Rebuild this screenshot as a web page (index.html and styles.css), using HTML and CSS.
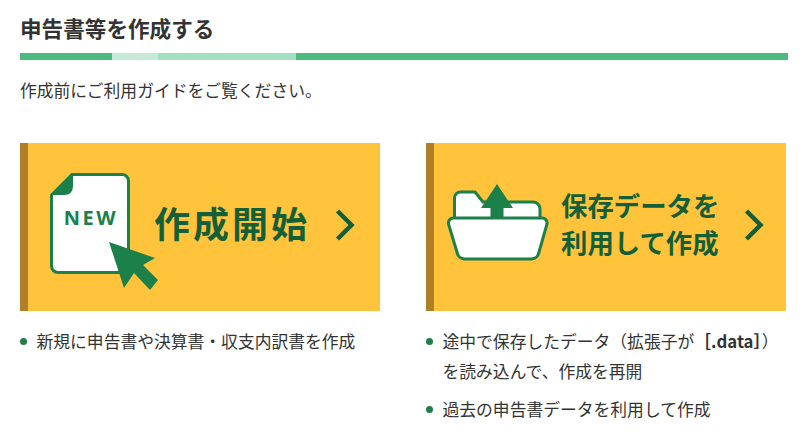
FILE: index.html
```html
<!DOCTYPE html>
<html lang="ja">
	<head>
		<meta charset="utf-8" />
		<meta name="viewport" content="width=device-width, initial-scale=1">
		<title>申告書等を作成する</title>
		<link rel="stylesheet" href="styles.css">
	</head>
	<body>
		<h1 class="title">申告書等を作成する</h1>
		<div class="bar">
			<span class="seg seg-a"></span>
			<span class="seg seg-b"></span>
			<span class="seg seg-c"></span>
			<span class="seg seg-d"></span>
		</div>
		<p class="guide">作成前にご利用ガイドをご覧ください。</p>

		<div class="cols">
			<div class="col">
				<a href="#" class="card card-new">
					<svg class="icon-new" width="110" height="118" viewBox="0 0 110 118">
						<path d="M22 1.5H72a6.500 6.500 0 0 1 6.500 6.500V93a6.500 6.500 0 0 1-6.500 6.500H8A6.500 6.500 0 0 1 1.500 93V22Z" fill="#fff" stroke="#1b8049" stroke-width="3"/>
						<path d="M22 1L1 22H14Q23 22 23 13V1Z" fill="#1b8049"/>
						<text x="41" y="52" class="new-text" text-anchor="middle">NEW</text>
						<path d="M59 69L105 85L93 92L108 107L100 117L84 100L74 115Z" fill="#1b8049"/>
					</svg>
					<span class="label label-big">作成開始</span>
					<svg class="arrow" width="20" height="34" viewBox="0 0 20 34">
						<path d="M2.500 3L16.500 17L2.500 31" fill="none" stroke="#145f37" stroke-width="4.500"/>
					</svg>
				</a>
				<ul class="notes">
					<li>新規に申告書や決算書・収支内訳書を作成</li>
				</ul>
			</div>
			<div class="col">
				<a href="#" class="card card-load">
					<svg class="icon-load" width="102" height="78" viewBox="0 0 102 78">
						<path d="M7.500 36V15a6 6 0 0 1 6-6H28L36 19H86a7 7 0 0 1 7 7V36Z" fill="#fff" stroke="#1b8049" stroke-width="3"/>
						<path d="M6 35H95a5 5 0 0 1 5 6L92 69a8 8 0 0 1-7 7H17a8 8 0 0 1-7-7L1.500 41a5 5 0 0 1 4.500-6Z" fill="#fff" stroke="#1b8049" stroke-width="3"/>
						<path d="M50 1L66 25H56.500V35H43.500V25H34Z" fill="#1b8049"/>
					</svg>
					<span class="label">保存データを<br>利用して作成</span>
					<svg class="arrow" width="20" height="34" viewBox="0 0 20 34">
						<path d="M2.500 3L16.500 17L2.500 31" fill="none" stroke="#145f37" stroke-width="4.500"/>
					</svg>
				</a>
				<ul class="notes">
					<li>途中で保存したデータ（拡張子が<b>［.data］</b>）<br>を読み込んで、作成を再開</li>
					<li>過去の申告書データを利用して作成</li>
				</ul>
			</div>
		</div>
	</body>
</html>
```

FILE: styles.css
```css
* {
	padding: 0;
	margin: 0;
	box-sizing: border-box;
	text-decoration: none;
}

html,
body {
	height: 442px;
	overflow: hidden;
}

body {
	background-color: #fff;
	color: #333;
	font-family: "Noto Sans CJK JP", "Noto Sans", sans-serif;
	font-size: 16.800px;
	padding: 13px 20px 0;
}

.title {
	font-size: 21.600px;
	line-height: 30px;
	font-weight: 700;
	color: #333;
}

.bar {
	display: flex;
	height: 7px;
	margin-top: 10px;
}

.seg {
	display: block;
}

.seg-a {
	width: 92px;
	background-color: #4dba82;
}

.seg-b {
	width: 46px;
	background-color: #c5e9d6;
}

.seg-c {
	width: 138px;
	background-color: #a3e0bf;
}

.seg-d {
	flex: 1;
	background-color: #4dba82;
}

.guide {
	line-height: 24px;
	margin-top: 18px;
}

.cols {
	display: flex;
	gap: 46px;
	margin-top: 41px;
}

.col {
	width: 360px;
}

.card {
	display: flex;
	align-items: flex-start;
	height: 168px;
	background-color: #ffc33c;
	border-left: 8px solid #b07f26;
}

.icon-new {
	flex: none;
	margin: 30px 0 0 22px;
}

.new-text {
	font-family: "Noto Sans", sans-serif;
	font-size: 20px;
	font-weight: 700;
	letter-spacing: 2.500px;
	fill: #1b8049;
}

.icon-load {
	flex: none;
	margin: 40px 0 0 13px;
}

.label {
	flex: none;
	color: #145f37;
	font-size: 26.400px;
	font-weight: 700;
	line-height: 37px;
	margin: 43px 0 0 12px;
}

.label-big {
	font-size: 36px;
	letter-spacing: 3px;
	line-height: 50px;
	margin: 54px 0 0 -6px;
}

.arrow {
	flex: none;
	margin: 65px 0 0 25px;
}

.notes {
	list-style: none;
	margin-top: 16px;
}

.notes li {
	position: relative;
	padding-left: 16.500px;
	line-height: 29.500px;
	margin-bottom: 8.500px;
	white-space: nowrap;
}

.notes li::before {
	content: "";
	position: absolute;
	left: 0;
	top: 11px;
	width: 7px;
	height: 7px;
	border-radius: 50%;
	background-color: #1b8049;
}

.notes b {
	font-weight: 700;
}
```
